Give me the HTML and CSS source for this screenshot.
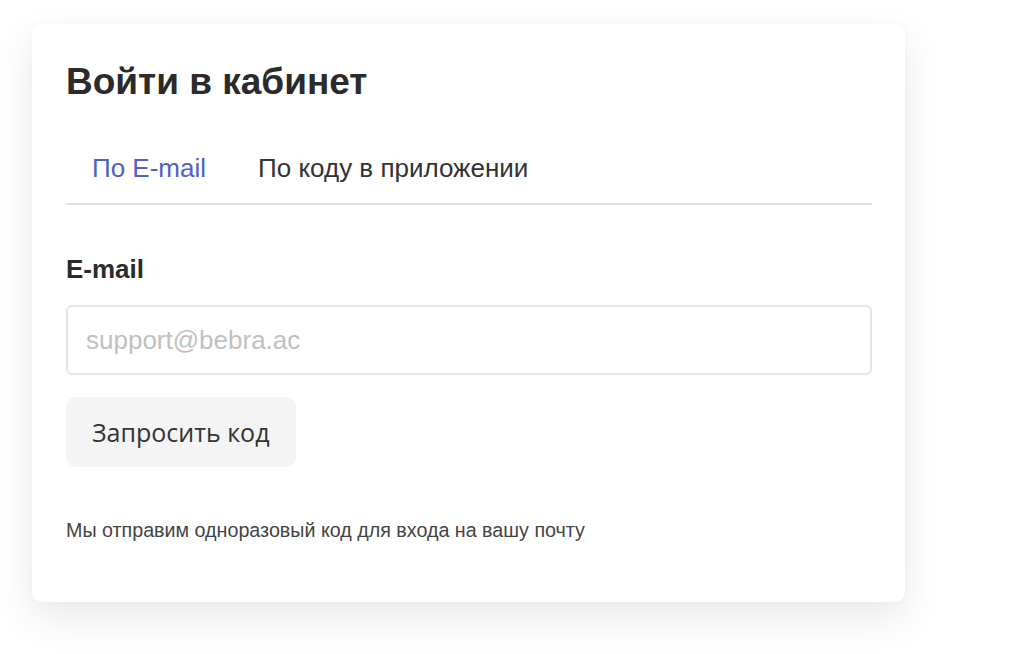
FILE: index.html
```html
<!DOCTYPE html>
<html lang="ru">
<head>
<meta charset="utf-8">
<title>Войти в кабинет</title>
<link rel="stylesheet" href="styles.css">
</head>
<body>
<div class="card">
  <h1 class="title">Войти в кабинет</h1>
  <div class="tabs">
    <div class="tab tab-active">По E-mail</div>
    <div class="tab">По коду в приложении</div>
  </div>
  <label class="label" for="email">E-mail</label>
  <input class="input" id="email" type="text" placeholder="support@bebra.ac">
  <button class="btn" type="button">Запросить код</button>
  <p class="note">Мы отправим одноразовый код для входа на вашу почту</p>
</div>
</body>
</html>
```
FILE: styles.css
```css
* { box-sizing: border-box; }
html, body { margin: 0; padding: 0; background: #fff; }
body {
  font-family: "Liberation Sans", Arial, sans-serif;
  color: #2b2b2b;
  padding: 24px 0 0 32px;
  min-height: 654px;
}
.card {
  width: 873px;
  height: 578px;
  background: #fff;
  border-radius: 10px;
  box-shadow: 0 16px 40px rgba(0,0,0,0.09), 0 0 6px rgba(0,0,0,0.03);
  padding: 34px 33px 0 34px;
  display: flex;
  flex-direction: column;
}
.title {
  margin: 0;
  font-size: 37px;
  line-height: 48px;
  font-weight: 700;
  color: #2b2b2b;
}
.tabs {
  display: flex;
  margin-top: 47px;
  border-bottom: 2px solid #e2e2e2;
}
.tab {
  font-size: 26px;
  line-height: 30px;
  padding: 0 26px 20px;
  color: #333;
}
.tab-active { color: #5060c8; }
.label {
  margin-top: 49px;
  font-size: 26px;
  line-height: 30px;
  font-weight: 700;
  color: #2b2b2b;
}
.input {
  margin-top: 21px;
  width: 100%;
  height: 70px;
  border: 2px solid #e4e4e4;
  border-radius: 6px;
  padding: 0 18px;
  font-family: "Liberation Sans", Arial, sans-serif;
  font-size: 26px;
  color: #333;
  outline: none;
}
.input::placeholder { color: #c0c0c0; }
.btn {
  align-self: flex-start;
  margin-top: 22px;
  height: 70px;
  padding: 0 26px;
  border: none;
  border-radius: 10px;
  background: #f4f4f4;
  font-family: "Open Sans", sans-serif;
  font-size: 25px;
  font-weight: 500;
  color: #333;
}
.note {
  margin: 51px 0 0;
  font-size: 19.7px;
  line-height: 24px;
  color: #444;
}
```
